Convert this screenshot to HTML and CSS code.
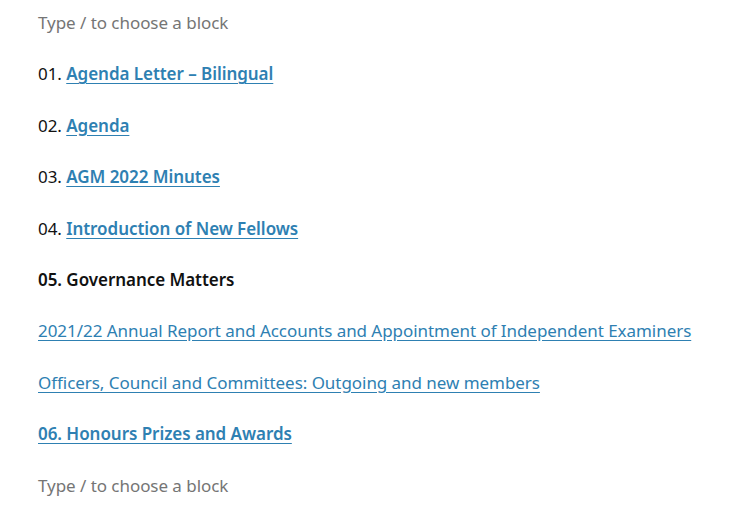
FILE: index.html
```html
<!DOCTYPE html>
<html>
<head>
	<title>Editor</title>
	<link rel="stylesheet" href="styles.css">
</head>
<body>
	<div class="editor">
		<p class="placeholder">Type / to choose a block</p>
		<p>01. <a class="strong" href="#">Agenda Letter – Bilingual</a></p>
		<p>02. <a class="strong" href="#">Agenda</a></p>
		<p>03. <a class="strong" href="#">AGM 2022 Minutes</a></p>
		<p>04. <a class="strong" href="#">Introduction of New Fellows</a></p>
		<p class="strong">05. Governance Matters</p>
		<p><a href="#">2021/22 Annual Report and Accounts and Appointment of Independent Examiners</a></p>
		<p><a href="#">Officers, Council and Committees: Outgoing and new members</a></p>
		<p><a class="strong" href="#">06. Honours Prizes and Awards</a></p>
		<p class="placeholder">Type / to choose a block</p>
	</div>
</body>
</html>
```

FILE: styles.css
```css
/* Page */
body {
	margin: 0;
	background-color: #fff;
	font-family: "Noto Sans", "Open Sans", sans-serif;
	color: #111;
}
.editor {
	padding: 7px 0 0 38px;
}
/* Blocks */
.editor p {
	margin: 0 0 19px 0;
	font-size: 17px;
	line-height: 32.4px;
	letter-spacing: -0.05px;
}
.placeholder {
	color: #757575;
}
.strong {
	font-weight: 600;
}
/* Links */
.editor a {
	color: #2e80b2;
	text-decoration: underline;
	text-underline-offset: 3px;
}
```
